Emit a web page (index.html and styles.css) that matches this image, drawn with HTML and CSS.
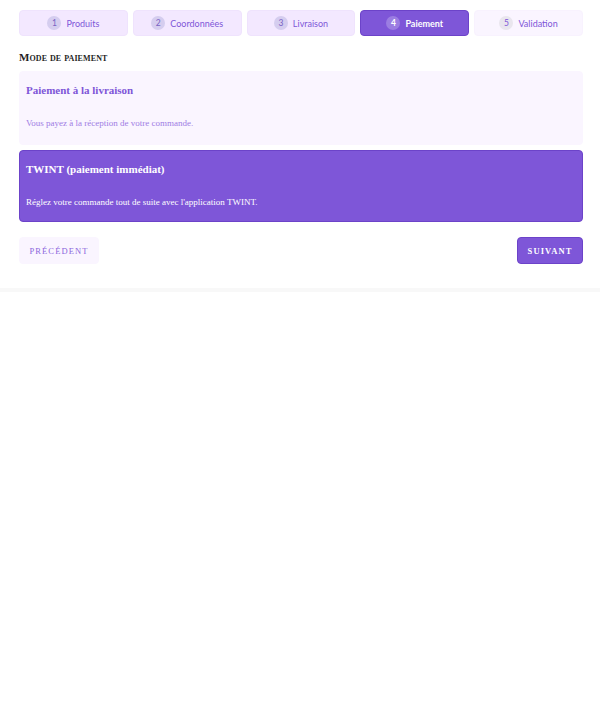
FILE: index.html
```html
<!DOCTYPE html>
<html lang="fr">
<head>
<meta charset="utf-8">
<link rel="stylesheet" href="styles.css">
</head>
<body>
<div class="page">
  <nav class="steps">
    <div class="step done"><span class="num">1</span><span>Produits</span></div>
    <div class="step done"><span class="num">2</span><span>Coordonnées</span></div>
    <div class="step done"><span class="num">3</span><span>Livraison</span></div>
    <div class="step active"><span class="num">4</span><span>Paiement</span></div>
    <div class="step todo"><span class="num">5</span><span>Validation</span></div>
  </nav>
  <h2 class="title">Mode de paiement</h2>
  <div class="option">
    <h3>Paiement à la livraison</h3>
    <p>Vous payez à la réception de votre commande.</p>
  </div>
  <div class="option selected">
    <h3>TWINT (paiement immédiat)</h3>
    <p>Réglez votre commande tout de suite avec l'application TWINT.</p>
  </div>
  <div class="actions">
    <button class="btn prev">Précédent</button>
    <button class="btn next">Suivant</button>
  </div>
</div>
<div class="band"></div>
</body>
</html>
```
FILE: styles.css
```css
html, body { margin: 0; padding: 0; background: #fff; }
body { font-family: "Liberation Serif", serif; }
.page { padding: 10px 17px 24px 19px; }
.steps { display: grid; grid-template-columns: repeat(5, 1fr); gap: 5px; }
.step {
  height: 26px; box-sizing: border-box; border-radius: 4px;
  display: flex; align-items: center; justify-content: center; gap: 5px;
  font-family: "Lato", sans-serif; font-size: 9px; color: #7e56d8;
  background: #f3e8ff; border: 1px solid #efe3fd;
}
.step .num {
  width: 14px; height: 14px; border-radius: 50%; display: flex; align-items: center; justify-content: center;
  background: #d5cdef; color: #7a62c4; font-size: 8.5px;
}
.step.active { background: #7e56d8; border-color: #6c43c9; color: #fff; font-weight: 700; }
.step.active .num { background: #9b7de2; color: #fff; }
.step.todo { background: #faf5ff; border-color: #f8f2fe; }
.step.todo .num { background: #e9e6ee; color: #7e56d8; }
.title {
  margin: 15px 0 8px; font-size: 11px; font-weight: 700; font-variant: small-caps;
  color: #1f1f1f; font-family: "Liberation Serif", serif; letter-spacing: 0.1px;
}
.option {
  background: #faf5ff; border-radius: 4px; padding: 12px 6px 15px; margin-bottom: 5px;
  border: 1px solid #faf5ff; box-sizing: border-box; height: 74px;
}
.option h3 { margin: 0 0 22px; font-size: 11px; font-weight: 700; color: #7e56d8; font-family: "Liberation Serif", serif; }
.option p { margin: 0; font-size: 9px; color: #a07ce4; font-family: "Liberation Serif", serif; }
.option.selected { background: #7e56d8; border-color: #6c43c9; height: 72px; }
.option.selected h3, .option.selected p { color: #fff; }
.actions { display: flex; justify-content: space-between; margin-top: 15px; }
.btn {
  height: 27px; border-radius: 4px; font-family: "Liberation Serif", serif; font-size: 8.5px;
  letter-spacing: 1.1px; text-transform: uppercase; padding: 0; cursor: pointer;
}
.btn.prev { background: #faf5ff; border: 1px solid #faf5ff; color: #8c67dd; width: 80px; }
.btn.next { background: #7e56d8; border: 1px solid #6c43c9; color: #fff; width: 66px; font-weight: 700; }
.band { height: 4px; background: #f8f8f8; }
```
